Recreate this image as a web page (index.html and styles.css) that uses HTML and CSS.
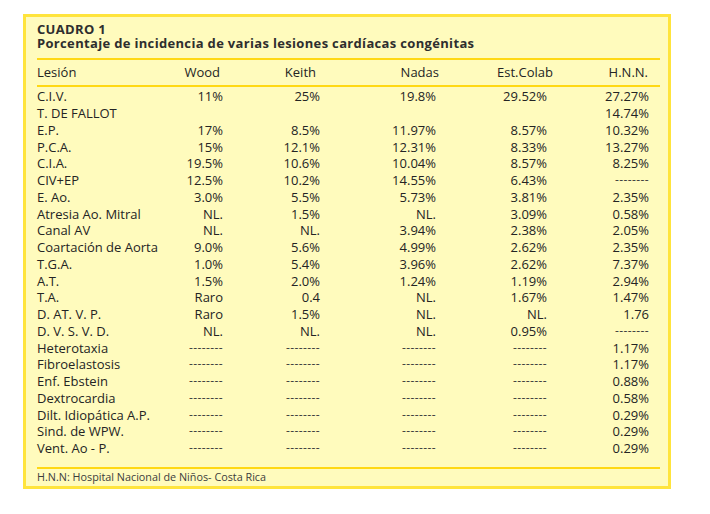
FILE: index.html
```html
<!DOCTYPE html>
<html lang="es">
<head>
<meta charset="utf-8">
<title>Cuadro 1</title>
<link rel="stylesheet" href="styles.css">
</head>
<body>
<div class="card">
  <div class="title">CUADRO 1</div>
  <div class="title">Porcentaje de incidencia de varias lesiones cardíacas congénitas</div>
  <div class="rule rule-top"></div>
  <div class="row head">
    <span>Lesión</span><span>Wood</span><span>Keith</span><span>Nadas</span><span>Est.Colab</span><span>H.N.N.</span>
  </div>
  <div class="rule rule-head"></div>
  <div class="rows">
    <div class="row"><span>C.I.V.</span><span>11%</span><span>25%</span><span>19.8%</span><span>29.52%</span><span>27.27%</span></div>
    <div class="row"><span>T. DE FALLOT</span><span></span><span></span><span></span><span></span><span>14.74%</span></div>
    <div class="row"><span>E.P.</span><span>17%</span><span>8.5%</span><span>11.97%</span><span>8.57%</span><span>10.32%</span></div>
    <div class="row"><span>P.C.A.</span><span>15%</span><span>12.1%</span><span>12.31%</span><span>8.33%</span><span>13.27%</span></div>
    <div class="row"><span>C.I.A.</span><span>19.5%</span><span>10.6%</span><span>10.04%</span><span>8.57%</span><span>8.25%</span></div>
    <div class="row"><span>CIV+EP</span><span>12.5%</span><span>10.2%</span><span>14.55%</span><span>6.43%</span><span class="dash">--------</span></div>
    <div class="row"><span>E. Ao.</span><span>3.0%</span><span>5.5%</span><span>5.73%</span><span>3.81%</span><span>2.35%</span></div>
    <div class="row"><span>Atresia Ao. Mitral</span><span>NL.</span><span>1.5%</span><span>NL.</span><span>3.09%</span><span>0.58%</span></div>
    <div class="row"><span>Canal AV</span><span>NL.</span><span>NL.</span><span>3.94%</span><span>2.38%</span><span>2.05%</span></div>
    <div class="row"><span>Coartación de Aorta</span><span>9.0%</span><span>5.6%</span><span>4.99%</span><span>2.62%</span><span>2.35%</span></div>
    <div class="row"><span>T.G.A.</span><span>1.0%</span><span>5.4%</span><span>3.96%</span><span>2.62%</span><span>7.37%</span></div>
    <div class="row"><span>A.T.</span><span>1.5%</span><span>2.0%</span><span>1.24%</span><span>1.19%</span><span>2.94%</span></div>
    <div class="row"><span>T.A.</span><span>Raro</span><span>0.4</span><span>NL.</span><span>1.67%</span><span>1.47%</span></div>
    <div class="row"><span>D. AT. V. P.</span><span>Raro</span><span>1.5%</span><span>NL.</span><span>NL.</span><span>1.76</span></div>
    <div class="row"><span>D. V. S. V. D.</span><span>NL.</span><span>NL.</span><span>NL.</span><span>0.95%</span><span class="dash">--------</span></div>
    <div class="row"><span>Heterotaxia</span><span class="dash">--------</span><span class="dash">--------</span><span class="dash">--------</span><span class="dash">--------</span><span>1.17%</span></div>
    <div class="row"><span>Fibroelastosis</span><span class="dash">--------</span><span class="dash">--------</span><span class="dash">--------</span><span class="dash">--------</span><span>1.17%</span></div>
    <div class="row"><span>Enf. Ebstein</span><span class="dash">--------</span><span class="dash">--------</span><span class="dash">--------</span><span class="dash">--------</span><span>0.88%</span></div>
    <div class="row"><span>Dextrocardia</span><span class="dash">--------</span><span class="dash">--------</span><span class="dash">--------</span><span class="dash">--------</span><span>0.58%</span></div>
    <div class="row"><span>Dilt. Idiopática A.P.</span><span class="dash">--------</span><span class="dash">--------</span><span class="dash">--------</span><span class="dash">--------</span><span>0.29%</span></div>
    <div class="row"><span>Sind. de WPW.</span><span class="dash">--------</span><span class="dash">--------</span><span class="dash">--------</span><span class="dash">--------</span><span>0.29%</span></div>
    <div class="row"><span>Vent. Ao - P.</span><span class="dash">--------</span><span class="dash">--------</span><span class="dash">--------</span><span class="dash">--------</span><span>0.29%</span></div>
  </div>
  <div class="rule rule-foot"></div>
  <div class="foot">H.N.N: Hospital Nacional de Niños- Costa Rica</div>
</div>
</body>
</html>
```

FILE: styles.css
```css
html, body {
  margin: 0;
  padding: 0;
  background: #ffffff;
}

body {
  font-family: "Open Sans", "Noto Sans", sans-serif;
  color: #242424;
}

.card {
  margin: 14px 0 0 23px;
  box-sizing: border-box;
  width: 648px;
  border: 3px solid #ffe43c;
  background: #fffbbd;
  padding: 6px 8px 3px 11px;
}

.title {
  font-size: 13px;
  line-height: 13.8px;
  font-weight: 700;
  letter-spacing: 0.33px;
  color: #2e2e2e;
}

.rule {
  height: 2px;
  background: #ffd814;
}

.rule-top {
  margin-top: 7px;
}

.rule-head {
  margin-top: 5px;
}

.rule-foot {
  margin-top: 10px;
}

.rows {
  margin-top: 1px;
}

.row {
  display: grid;
  grid-template-columns: 140px 46px 97px 116px 111px 102px;
  font-size: 13px;
  line-height: 16.76px;
  height: 16.76px;
  white-space: nowrap;
}

.head {
  margin-top: 4px;
}

.row > span {
  text-align: right;
}

.row > span:first-child {
  text-align: left;
}

.head > span:nth-child(2) { margin-right: 3px; }
.head > span:nth-child(3) { margin-right: 4px; }
.head > span:nth-child(4) { margin-right: -3px; }
.head > span:nth-child(5) { margin-right: -6px; }
.head > span:nth-child(6) { margin-right: 1px; }

.dash {
  color: #404040;
  letter-spacing: 0.4px;
  font-size: 12px;
}

.foot {
  margin-top: 2px;
  font-size: 10.8px;
  line-height: 12px;
  color: #3c3c3c;
}
```
